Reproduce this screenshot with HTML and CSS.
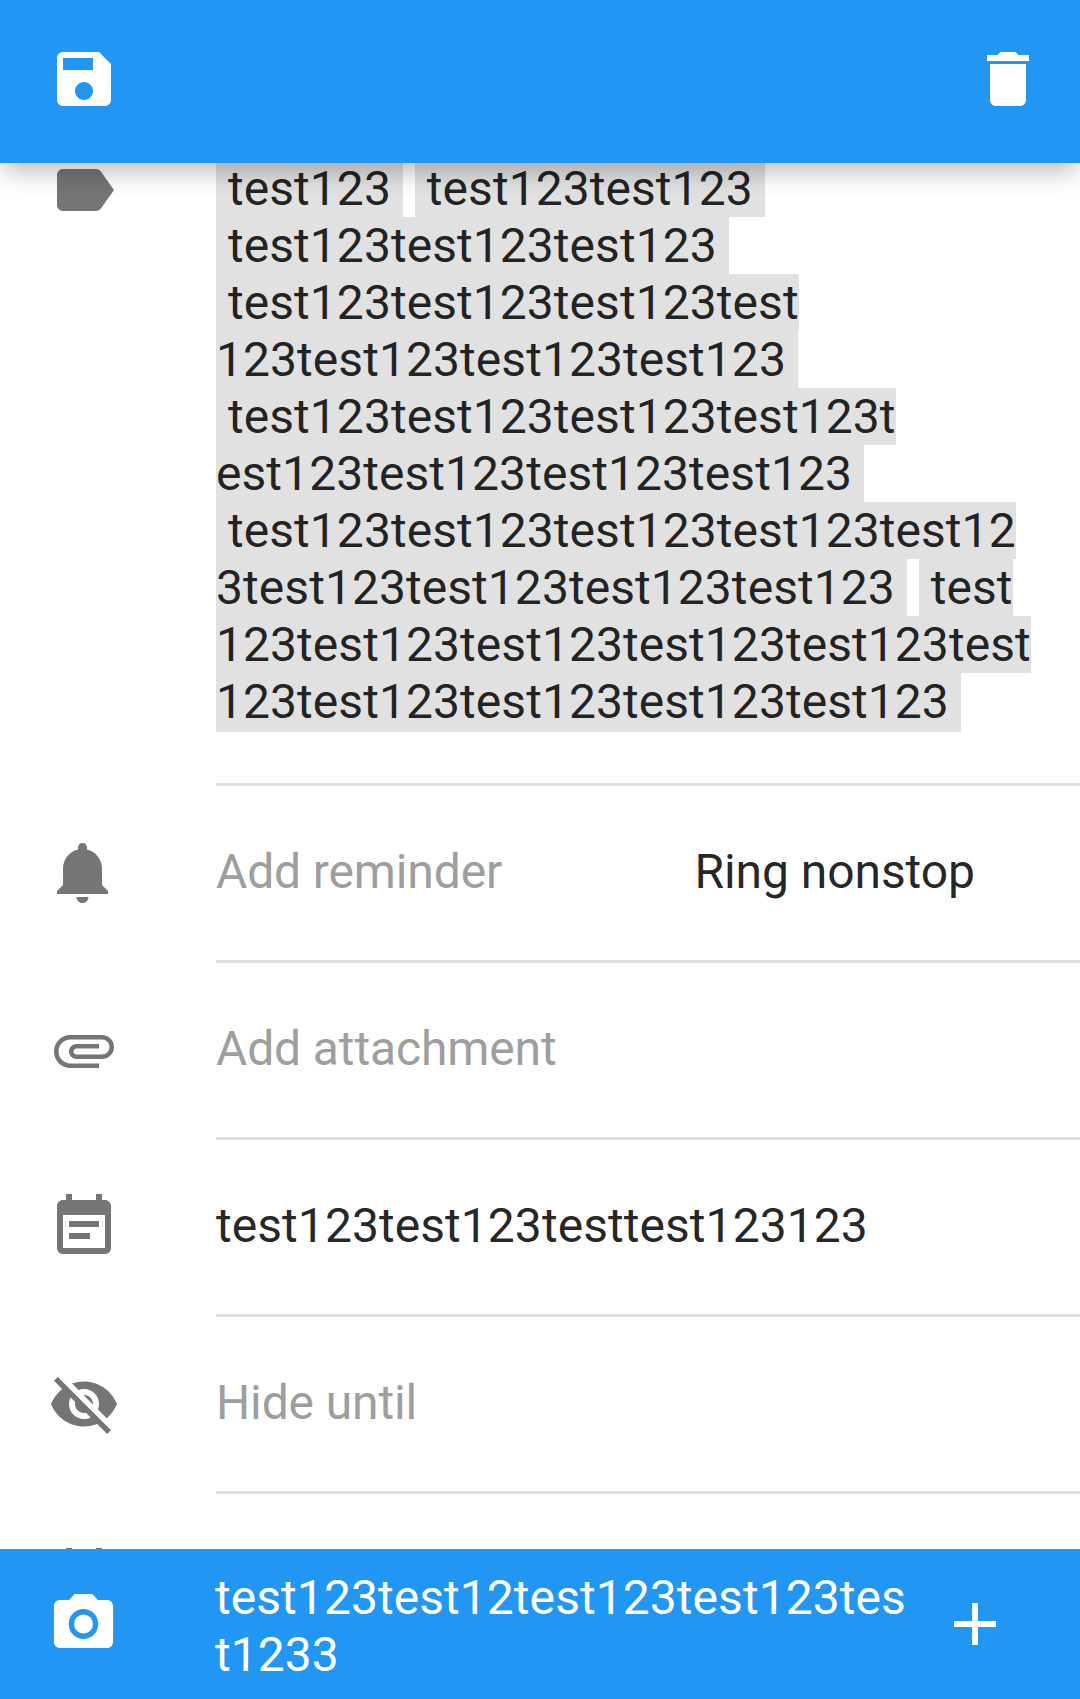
FILE: index.html
```html
<!DOCTYPE html>
<html lang="en">
<head>
<meta charset="utf-8">
<title>Edit task</title>
<link rel="stylesheet" href="styles.css">
</head>
<body>
<div class="app">
  <header class="toolbar">
    <button class="icon-button" aria-label="Save">
      <svg class="icon" viewBox="0 0 24 24"><path d="M17 3H5c-1.11 0-2 .9-2 2v14c0 1.1.89 2 2 2h14c1.1 0 2-.9 2-2V7l-4-4zm-5 16c-1.66 0-3-1.34-3-3s1.34-3 3-3 3 1.34 3 3-1.34 3-3 3zm3-10H5V5h10v4z"/></svg>
    </button>
    <button class="icon-button" aria-label="Delete">
      <svg class="icon" viewBox="0 0 24 24"><path d="M6 19c0 1.1.9 2 2 2h8c1.1 0 2-.9 2-2V7H6v12zM19 4h-3.5l-1-1h-5l-1 1H5v2h14V4z"/></svg>
    </button>
  </header>

  <main class="content">
    <div class="rows">
      <section class="row">
        <svg class="icon" viewBox="0 0 24 24"><path d="M17.63 5.84C17.27 5.33 16.67 5 16 5L5 5.01C3.9 5.01 3 5.9 3 7v10c0 1.1.9 1.99 2 1.99L16 19c.67 0 1.27-.33 1.63-.84L22 12l-4.37-6.16z"/></svg>
        <div class="row-body">
          <p class="tags"><span class="tag">&nbsp;test123&nbsp;</span> <span class="tag">&nbsp;test123test123&nbsp;</span><br>
<span class="tag">&nbsp;test123test123test123&nbsp;</span><br>
<span class="tag">&nbsp;test123test123test123test<br>123test123test123test123&nbsp;</span><br>
<span class="tag">&nbsp;test123test123test123test123t<br>est123test123test123test123&nbsp;</span><br>
<span class="tag">&nbsp;test123test123test123test123test12<br>3test123test123test123test123&nbsp;</span> <span class="tag">&nbsp;test<br>123test123test123test123test123test<br><span class="tag-end">123test123test123test123test123&nbsp;</span></span></p>
        </div>
      </section>

      <section class="row">
        <svg class="icon" viewBox="0 0 24 24"><path d="M11.5 22c1.1 0 2-.9 2-2h-4c0 1.1.9 2 2 2zm6.5-6v-5.5c0-3.07-2.13-5.64-5-6.32V3.5c0-.83-.67-1.5-1.5-1.5S10 2.67 10 3.5v.68c-2.87.68-5 3.25-5 6.32V16l-2 2v1h17v-1l-2-2z"/></svg>
        <div class="row-body">
          <span class="hint">Add reminder</span>
          <span class="ring-mode">Ring nonstop</span>
        </div>
      </section>

      <section class="row">
        <svg class="icon" viewBox="0 0 24 24"><path d="M7.5 18C4.46 18 2 15.54 2 12.5S4.46 7 7.5 7H18c2.21 0 4 1.79 4 4s-1.79 4-4 4H9.5C8.12 15 7 13.88 7 12.5S8.12 10 9.5 10H17v1.5H9.5c-.55 0-1 .45-1 1s.45 1 1 1H18c1.38 0 2.5-1.12 2.5-2.5S19.38 8.5 18 8.5H7.5c-2.21 0-4 1.79-4 4s1.79 4 4 4H17V18H7.5z"/></svg>
        <div class="row-body"><span class="hint">Add attachment</span></div>
      </section>

      <section class="row">
        <svg class="icon" viewBox="0 0 24 24"><path d="M17 10H7v2h10v-2zm2-7h-1V1h-2v2H8V1H6v2H5c-1.11 0-1.99.9-1.99 2L3 19c0 1.1.89 2 2 2h14c1.1 0 2-.9 2-2V5c0-1.1-.9-2-2-2zm0 16H5V8h14v11zm-5-5H7v2h7v-2z"/></svg>
        <div class="row-body"><span>test123test123testtest123123</span></div>
      </section>

      <section class="row">
        <svg class="icon" viewBox="0 0 24 24"><path d="M12 7c2.76 0 5 2.24 5 5 0 .65-.13 1.26-.36 1.83l2.92 2.92c1.51-1.26 2.7-2.89 3.43-4.75-1.73-4.39-6-7.5-11-7.5-1.4 0-2.74.25-3.98.7l2.16 2.16C10.74 7.13 11.35 7 12 7zM2 4.27l2.28 2.28.46.46C3.08 8.3 1.78 10.02 1 12c1.73 4.39 6 7.5 11 7.5 1.55 0 3.03-.3 4.38-.84l.42.42L19.73 22 21 20.73 3.27 3 2 4.27zM7.53 9.8l1.55 1.55c-.05.21-.08.43-.08.65 0 1.66 1.34 3 3 3 .22 0 .44-.03.65-.08l1.55 1.55c-.67.33-1.41.53-2.2.53-2.76 0-5-2.24-5-5 0-.79.2-1.53.53-2.2zm4.31-.78l3.15 3.15.02-.16c0-1.66-1.34-3-3-3l-.17.01z"/></svg>
        <div class="row-body"><span class="hint">Hide until</span></div>
      </section>

      <section class="row">
        <svg class="icon" viewBox="0 0 24 24"><path d="M17 12h-5v5h5v-5zM16 1v2H8V1H6v2H5c-1.11 0-1.99.9-1.99 2L3 19c0 1.1.89 2 2 2h14c1.1 0 2-.9 2-2V5c0-1.1-.9-2-2-2h-1V1h-2zm3 18H5V8h14v11z"/></svg>
        <div class="row-body"></div>
      </section>
    </div>
  </main>

  <footer class="comment-bar">
    <button class="icon-button" aria-label="Camera">
      <svg class="icon camera" viewBox="0 0 24 24" preserveAspectRatio="none"><circle cx="12" cy="12" r="3.2"/><path d="M9 2L7.17 4H4c-1.1 0-2 .9-2 2v12c0 1.1.9 2 2 2h16c1.1 0 2-.9 2-2V6c0-1.1-.9-2-2-2h-3.17L15 2H9zm3 15c-2.76 0-5-2.24-5-5s2.24-5 5-5 5 2.24 5 5-2.24 5-5 5z"/></svg>
    </button>
    <p class="comment">test123test12test123test123tes<br>t1233</p>
    <button class="icon-button" aria-label="Add comment">
      <svg class="icon" viewBox="0 0 24 24"><path d="M19 13h-6v6h-2v-6H5v-2h6V5h2v6h6v2z"/></svg>
    </button>
  </footer>
</div>
</body>
</html>
```
FILE: styles.css
```css
* {
  box-sizing: border-box;
}

body {
  margin: 0;
  background: #fff;
  color: rgba(0, 0, 0, 0.87);
  font: 48px/57px Roboto, sans-serif;
  letter-spacing: 0.055px;
}

p {
  margin: 0;
}

.app {
  display: flex;
  flex-direction: column;
  height: 1699px;
  overflow: hidden;
}

.icon {
  display: block;
  flex: none;
  width: 72px;
  height: 72px;
  fill: currentColor;
}

.icon-button {
  flex: none;
  padding: 0;
  border: 0;
  background: none;
  color: #fff;
}

/* Toolbar */
.toolbar {
  position: relative;
  z-index: 1;
  display: flex;
  flex: none;
  justify-content: space-between;
  align-items: flex-start;
  height: 163px;
  padding: 43px 36px 0 48px;
  background: #2196f3;
  box-shadow: 0 12px 24px -4px rgba(0, 0, 0, 0.28);
}

/* Scrolled list of task fields */
.content {
  flex: 1;
  min-height: 0;
  overflow: hidden;
}

.rows {
  margin-top: -60px;
}

.row {
  display: flex;
  align-items: flex-start;
  gap: 96px;
  padding-left: 48px;
}

.row > .icon {
  margin-top: 51px;
  color: #757575;
}

.row-body {
  display: flex;
  flex: 1;
  align-items: flex-start;
  min-height: 177px;
  padding: 57px 0 51px;
  border-bottom: 3px solid #e0e0e0;
  white-space: nowrap;
}

.hint {
  color: #9e9e9e;
  letter-spacing: -0.13px;
}

.ring-mode {
  margin-left: auto;
  margin-right: 105px;
  letter-spacing: -0.06px;
}

.tags {
  padding-bottom: 2px;
}

.tag {
  background: #e1e1e1;
}

.tag-end {
  padding-bottom: 2px;
  background: #e1e1e1;
}

/* Comment bar */
.comment-bar {
  display: flex;
  flex: none;
  align-items: flex-start;
  height: 150px;
  padding: 20px 69px 0 48px;
  background: #2196f3;
  color: #fff;
}

.comment-bar .icon-button {
  margin-top: 19px;
}

.camera {
  width: 71px;
}

.comment {
  flex: 1;
  margin-left: 96px;
  white-space: nowrap;
}
```
